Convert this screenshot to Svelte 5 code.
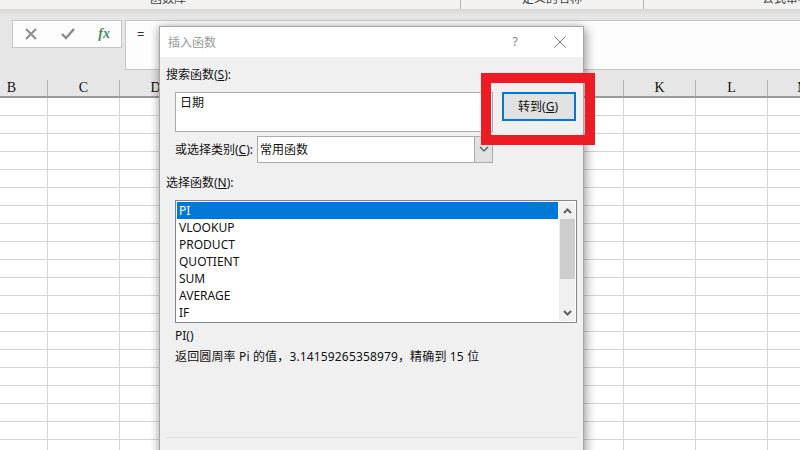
<script>
    const columns = ['B', 'C', 'D', 'E', 'F', 'G', 'H', 'I', 'J', 'K', 'L', 'M'];
    const rows = Array.from({ length: 20 }, (_, i) => i);
    const functions = ['PI', 'VLOOKUP', 'PRODUCT', 'QUOTIENT', 'SUM', 'AVERAGE', 'IF'];
</script>

<div class="page">
    <div class="ribbon">
        <div class="group first"><span>函数库</span></div>
        <div class="group second"><span>定义的名称</span></div>
        <div class="group third"><span>公式审核</span></div>
    </div>

    <div class="formula-row">
        <div class="formula-buttons">
            <svg width="14" height="14" viewBox="0 0 14 14"><path d="M2 2l10 10M12 2L2 12" stroke="#8a8a8a" stroke-width="2" fill="none" /></svg>
            <svg width="16" height="14" viewBox="0 0 16 14"><path d="M2 7l4 4 8-9" stroke="#8a8a8a" stroke-width="2.4" fill="none" /></svg>
            <span class="fx">fx</span>
        </div>
        <div class="formula-input">=</div>
    </div>

    <div class="col-headers">
        {#each columns as col}
            <div class="col-header">{col}</div>
        {/each}
    </div>

    <div class="sheet">
        {#each rows as row (row)}
            <div class="sheet-row">
                {#each columns as col}
                    <div class="cell"></div>
                {/each}
            </div>
        {/each}
    </div>

    <div class="dialog">
        <div class="titlebar">
            <span class="title">插入函数</span>
            <span class="help">?</span>
            <svg class="close" width="12" height="12" viewBox="0 0 12 12"><path d="M.5.5l11 11M11.5.5l-11 11" stroke="#7a7a7a" fill="none" /></svg>
        </div>
        <div class="body">
            <div class="label">搜索函数(<u>S</u>):</div>
            <div class="search">
                <div class="search-box">日期</div>
                <button class="go">转到(<u>G</u>)</button>
            </div>
            <div class="category">
                <span class="category-label">或选择类别(<u>C</u>):</span>
                <div class="select">
                    <span class="select-value">常用函数</span>
                    <span class="select-arrow">
                        <svg width="10" height="6" viewBox="0 0 10 6"><path d="M1 1l4 4 4-4" stroke="#555" stroke-width="1.2" fill="none" /></svg>
                    </span>
                </div>
            </div>
            <div class="label pick">选择函数(<u>N</u>):</div>
            <div class="list">
                <div class="items">
                    {#each functions as fn, i}
                        <div class="item" class:selected={i === 0}>{fn}</div>
                    {/each}
                </div>
                <div class="scrollbar">
                    <svg class="arrow" width="9" height="6" viewBox="0 0 9 6"><path d="M1 5l3.5-3.5L8 5" stroke="#606060" stroke-width="2" fill="none" /></svg>
                    <div class="thumb"></div>
                    <svg class="arrow down" width="9" height="6" viewBox="0 0 9 6"><path d="M1 1l3.5 3.5L8 1" stroke="#606060" stroke-width="2" fill="none" /></svg>
                </div>
            </div>
            <div class="signature">PI()</div>
            <div class="desc">返回圆周率 Pi 的值，3.14159265358979，精确到 15 位</div>
            <div class="divider"></div>
        </div>
    </div>

    <div class="highlight"></div>
</div>

<style>
    :global(body) {
        margin: 0;
    }

    .page {
        position: relative;
        width: 800px;
        height: 450px;
        overflow: hidden;
        background: #fff;
        font-family: "Noto Sans", "Noto Sans CJK SC", sans-serif;
        font-size: 12px;
        color: #111;
    }

    .ribbon {
        display: flex;
        height: 9px;
        overflow: hidden;
        background: #f3f2f1;
        color: #444;
    }

    .group {
        flex: none;
        height: 9px;
        line-height: 16px;
        text-align: center;
        border-right: 1px solid #b5b5b5;
    }

    .group span {
        display: block;
        margin-top: -9px;
    }

    .first {
        width: 584px;
        margin-left: -124px;
    }

    .second {
        width: 182px;
    }

    .third {
        width: 284px;
        border-right: none;
    }

    .formula-row {
        display: flex;
        gap: 3px;
        height: 61px;
        box-sizing: border-box;
        padding: 11px 0 0 12px;
        background: linear-gradient(#d8d8d8, #e6e6e6 7px);
    }

    .formula-buttons {
        display: flex;
        align-items: center;
        justify-content: space-between;
        box-sizing: border-box;
        width: 110px;
        height: 28px;
        padding: 0 11px;
        background: #fdfdfd;
        border: 1px solid #c6c6c6;
    }

    .fx {
        font-family: "Liberation Serif", serif;
        font-size: 14px;
        font-style: italic;
        font-weight: bold;
        color: #3f8f5f;
    }

    .formula-input {
        flex: 1;
        box-sizing: border-box;
        height: 50px;
        padding: 4px 0 0 11px;
        background: #fdfdfd;
        border: 1px solid #c6c6c6;
        border-right: none;
        margin-right: -1px;
        font-size: 13px;
        color: #333;
    }

    .col-headers,
    .sheet-row {
        display: flex;
        margin-left: -24px;
    }

    .col-headers {
        height: 28px;
        box-sizing: border-box;
        padding-top: 10px;
        background: #e6e6e6;
        border-bottom: 2px solid #9a9a9a;
    }

    .col-header {
        flex: none;
        box-sizing: border-box;
        width: 72px;
        border-right: 1px solid #b0b0b0;
        text-align: center;
        font-family: "Liberation Serif", serif;
        font-size: 14px;
        line-height: 15px;
        color: #111;
    }

    .sheet-row {
        height: 18px;
    }

    .cell {
        flex: none;
        box-sizing: border-box;
        width: 72px;
        border-right: 1px solid #d4d4d4;
        border-bottom: 1px solid #d4d4d4;
    }

    .dialog {
        position: absolute;
        top: 26px;
        left: 159px;
        width: 425px;
        height: 440px;
        box-sizing: border-box;
        background: #f0f0f0;
        border: 1px solid #a6a6a6;
        box-shadow: 3px 3px 10px rgba(0, 0, 0, 0.3), -2px 0 8px rgba(0, 0, 0, 0.18);
    }

    .titlebar {
        display: flex;
        align-items: center;
        height: 30px;
        padding: 0 17px 0 8px;
        background: #fff;
    }

    .title {
        flex: 1;
        font-size: 12px;
        color: #999;
    }

    .help {
        margin: -3px 36px 0 0;
        font-size: 13px;
        color: #888;
    }

    .body {
        padding: 9px 6px 0;
    }

    .label {
        line-height: 17px;
    }

    .search {
        display: flex;
        gap: 9px;
        margin: 9px 0 0 9px;
    }

    .search-box {
        box-sizing: border-box;
        width: 318px;
        height: 40px;
        padding: 0 4px;
        background: #fff;
        border: 1px solid #ababab;
    }

    .go {
        box-sizing: border-box;
        width: 74px;
        height: 29px;
        padding: 0 2px 2px 0;
        background: #e1e1e1;
        border: 2px solid #0078d7;
        font: inherit;
        color: inherit;
    }

    .category {
        display: flex;
        align-items: center;
        margin: 4px 0 0 9px;
    }

    .category-label {
        width: 82px;
        padding-bottom: 2px;
    }

    .select {
        display: flex;
        box-sizing: border-box;
        width: 236px;
        height: 27px;
        background: #fff;
        border: 1px solid #ababab;
    }

    .select-value {
        flex: 1;
        padding: 3px 2px;
    }

    .select-arrow {
        display: flex;
        align-items: center;
        justify-content: center;
        width: 17px;
        padding-bottom: 2px;
        background: #e1e1e1;
        border-left: 1px solid #ababab;
    }

    .pick {
        margin-top: 11px;
    }

    .list {
        display: flex;
        box-sizing: border-box;
        width: 402px;
        height: 123px;
        margin: 9px 0 0 9px;
        padding: 1px;
        background: #fff;
        border: 1px solid #82878f;
    }

    .items {
        flex: 1;
    }

    .item {
        height: 17px;
        line-height: 17px;
        padding-left: 2px;
    }

    .selected {
        background: #0078d7;
        color: #fff;
    }

    .scrollbar {
        display: flex;
        flex-direction: column;
        align-items: center;
        width: 16px;
        margin-left: 1px;
        background: #f0f0f0;
    }

    .arrow {
        margin: 6px 0 5px;
    }

    .arrow.down {
        margin-top: auto;
        margin-bottom: 5px;
    }

    .thumb {
        width: 15px;
        height: 60px;
        background: #cdcdcd;
    }

    .signature {
        margin: 4px 0 0 9px;
        line-height: 18px;
    }

    .desc {
        margin: 3px 0 0 9px;
        line-height: 18px;
        letter-spacing: 0.15px;
    }

    .divider {
        height: 1px;
        margin-top: 71px;
        background: #dfdfdf;
    }

    .highlight {
        position: absolute;
        top: 73px;
        left: 481px;
        width: 114px;
        height: 72px;
        box-sizing: border-box;
        border: 10px solid #ed1c24;
    }
</style>
